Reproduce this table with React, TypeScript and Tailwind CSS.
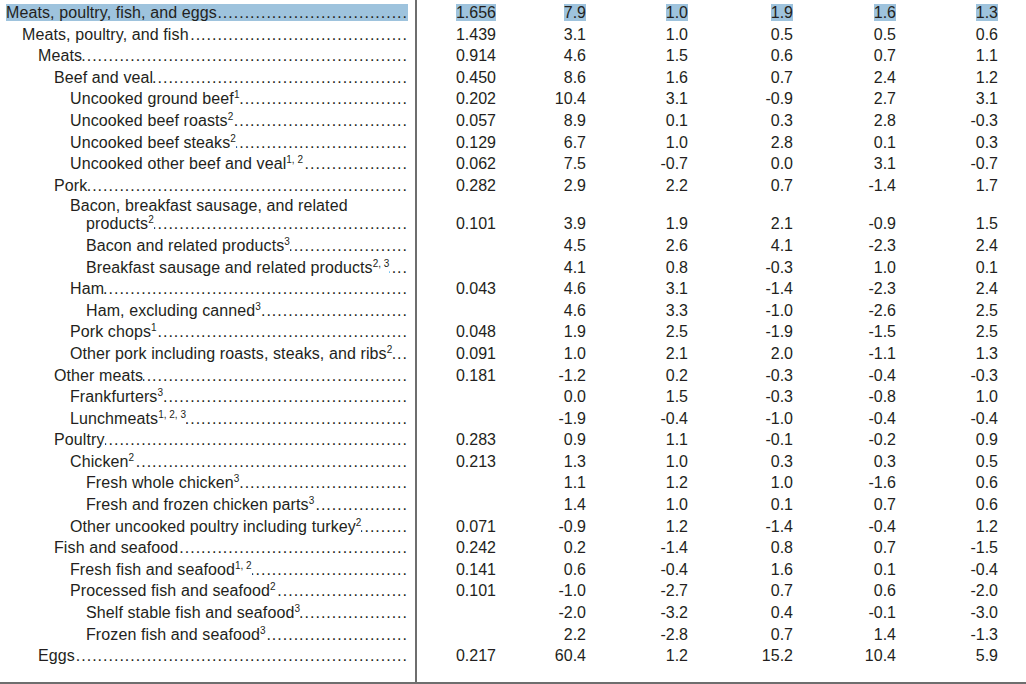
type Row = {
  label: string
  cont?: string
  sup?: string
  level: number
  values: string[]
  highlight?: boolean
}

const rows: Row[] = [
  { label: 'Meats, poultry, fish, and eggs', level: 0, values: ['1.656', '7.9', '1.0', '1.9', '1.6', '1.3'], highlight: true },
  { label: 'Meats, poultry, and fish', level: 1, values: ['1.439', '3.1', '1.0', '0.5', '0.5', '0.6'] },
  { label: 'Meats', level: 2, values: ['0.914', '4.6', '1.5', '0.6', '0.7', '1.1'] },
  { label: 'Beef and veal', level: 3, values: ['0.450', '8.6', '1.6', '0.7', '2.4', '1.2'] },
  { label: 'Uncooked ground beef', sup: '1', level: 4, values: ['0.202', '10.4', '3.1', '-0.9', '2.7', '3.1'] },
  { label: 'Uncooked beef roasts', sup: '2', level: 4, values: ['0.057', '8.9', '0.1', '0.3', '2.8', '-0.3'] },
  { label: 'Uncooked beef steaks', sup: '2', level: 4, values: ['0.129', '6.7', '1.0', '2.8', '0.1', '0.3'] },
  { label: 'Uncooked other beef and veal', sup: '1, 2', level: 4, values: ['0.062', '7.5', '-0.7', '0.0', '3.1', '-0.7'] },
  { label: 'Pork', level: 3, values: ['0.282', '2.9', '2.2', '0.7', '-1.4', '1.7'] },
  { label: 'Bacon, breakfast sausage, and related', cont: 'products', sup: '2', level: 4, values: ['0.101', '3.9', '1.9', '2.1', '-0.9', '1.5'] },
  { label: 'Bacon and related products', sup: '3', level: 5, values: ['', '4.5', '2.6', '4.1', '-2.3', '2.4'] },
  { label: 'Breakfast sausage and related products', sup: '2, 3', level: 5, values: ['', '4.1', '0.8', '-0.3', '1.0', '0.1'] },
  { label: 'Ham', level: 4, values: ['0.043', '4.6', '3.1', '-1.4', '-2.3', '2.4'] },
  { label: 'Ham, excluding canned', sup: '3', level: 5, values: ['', '4.6', '3.3', '-1.0', '-2.6', '2.5'] },
  { label: 'Pork chops', sup: '1', level: 4, values: ['0.048', '1.9', '2.5', '-1.9', '-1.5', '2.5'] },
  { label: 'Other pork including roasts, steaks, and ribs', sup: '2', level: 4, values: ['0.091', '1.0', '2.1', '2.0', '-1.1', '1.3'] },
  { label: 'Other meats', level: 3, values: ['0.181', '-1.2', '0.2', '-0.3', '-0.4', '-0.3'] },
  { label: 'Frankfurters', sup: '3', level: 4, values: ['', '0.0', '1.5', '-0.3', '-0.8', '1.0'] },
  { label: 'Lunchmeats', sup: '1, 2, 3', level: 4, values: ['', '-1.9', '-0.4', '-1.0', '-0.4', '-0.4'] },
  { label: 'Poultry', level: 3, values: ['0.283', '0.9', '1.1', '-0.1', '-0.2', '0.9'] },
  { label: 'Chicken', sup: '2', level: 4, values: ['0.213', '1.3', '1.0', '0.3', '0.3', '0.5'] },
  { label: 'Fresh whole chicken', sup: '3', level: 5, values: ['', '1.1', '1.2', '1.0', '-1.6', '0.6'] },
  { label: 'Fresh and frozen chicken parts', sup: '3', level: 5, values: ['', '1.4', '1.0', '0.1', '0.7', '0.6'] },
  { label: 'Other uncooked poultry including turkey', sup: '2', level: 4, values: ['0.071', '-0.9', '1.2', '-1.4', '-0.4', '1.2'] },
  { label: 'Fish and seafood', level: 3, values: ['0.242', '0.2', '-1.4', '0.8', '0.7', '-1.5'] },
  { label: 'Fresh fish and seafood', sup: '1, 2', level: 4, values: ['0.141', '0.6', '-0.4', '1.6', '0.1', '-0.4'] },
  { label: 'Processed fish and seafood', sup: '2', level: 4, values: ['0.101', '-1.0', '-2.7', '0.7', '0.6', '-2.0'] },
  { label: 'Shelf stable fish and seafood', sup: '3', level: 5, values: ['', '-2.0', '-3.2', '0.4', '-0.1', '-3.0'] },
  { label: 'Frozen fish and seafood', sup: '3', level: 5, values: ['', '2.2', '-2.8', '0.7', '1.4', '-1.3'] },
  { label: 'Eggs', level: 2, values: ['0.217', '60.4', '1.2', '15.2', '10.4', '5.9'] },
]

const indents = ['pl-[6px]', 'pl-[22px]', 'pl-[38px]', 'pl-[54px]', 'pl-[70px]', 'pl-[86px]']
const gridCols = 'grid grid-cols-[415px_81px_90px_102px_105px_103px_102px]'
const DOTS = '.'.repeat(120)

function Leader({ text, sup, highlight }: { text: string; sup?: string; highlight?: boolean }) {
  return (
    <div className={`flex ${highlight ? 'bg-[#9ec3dd] leading-[17px] my-[1.3px]' : ''}`}>
      <span className="whitespace-nowrap shrink-0 tracking-[0.1px]">
        {text}
        {sup && <sup className="text-[10px] leading-none align-[6px] top-0 tracking-normal">{sup}</sup>}
      </span>
      <div className="flex-1 min-w-0 flex justify-end overflow-hidden">
        <span className="shrink-0 whitespace-nowrap tracking-[1px]">{DOTS}</span>
      </div>
    </div>
  )
}

function Divider({ className = '' }: { className?: string }) {
  return (
    <div className={`${gridCols} ${className}`}>
      <div />
      <div className="border-l-2 border-[#6e6e6e]" />
    </div>
  )
}

export default function App() {
  return (
    <div className="w-[1026px] h-[684px] bg-white text-[#231f20] text-[16px] leading-[19.6px] font-['Liberation_Sans',Arial,sans-serif] flex flex-col border-b-2 border-[#6e6e6e] overflow-hidden">
      <Divider className="h-[2px] shrink-0" />
      {rows.map((r, i) => (
        <div key={i} className={`${gridCols} items-end`}>
          <div className={`${indents[r.level]} pr-[7px] py-px`}>
            {r.cont ? (
              <>
                <div className="whitespace-nowrap tracking-[0.1px] leading-[17px]">{r.label}</div>
                <div className="pl-4">
                  <Leader text={r.cont} sup={r.sup} />
                </div>
              </>
            ) : (
              <Leader text={r.label} sup={r.sup} highlight={r.highlight} />
            )}
          </div>
          {r.values.map((v, j) => (
            <div
              key={j}
              className={`text-right py-px self-stretch flex items-end justify-end ${j === 0 ? 'border-l-2 border-[#6e6e6e]' : ''}`}
            >
              <span className={r.highlight ? 'bg-[#9ec3dd] leading-[17px] my-[1.3px]' : ''}>{v}</span>
            </div>
          ))}
        </div>
      ))}
      <Divider className="flex-1" />
    </div>
  )
}
